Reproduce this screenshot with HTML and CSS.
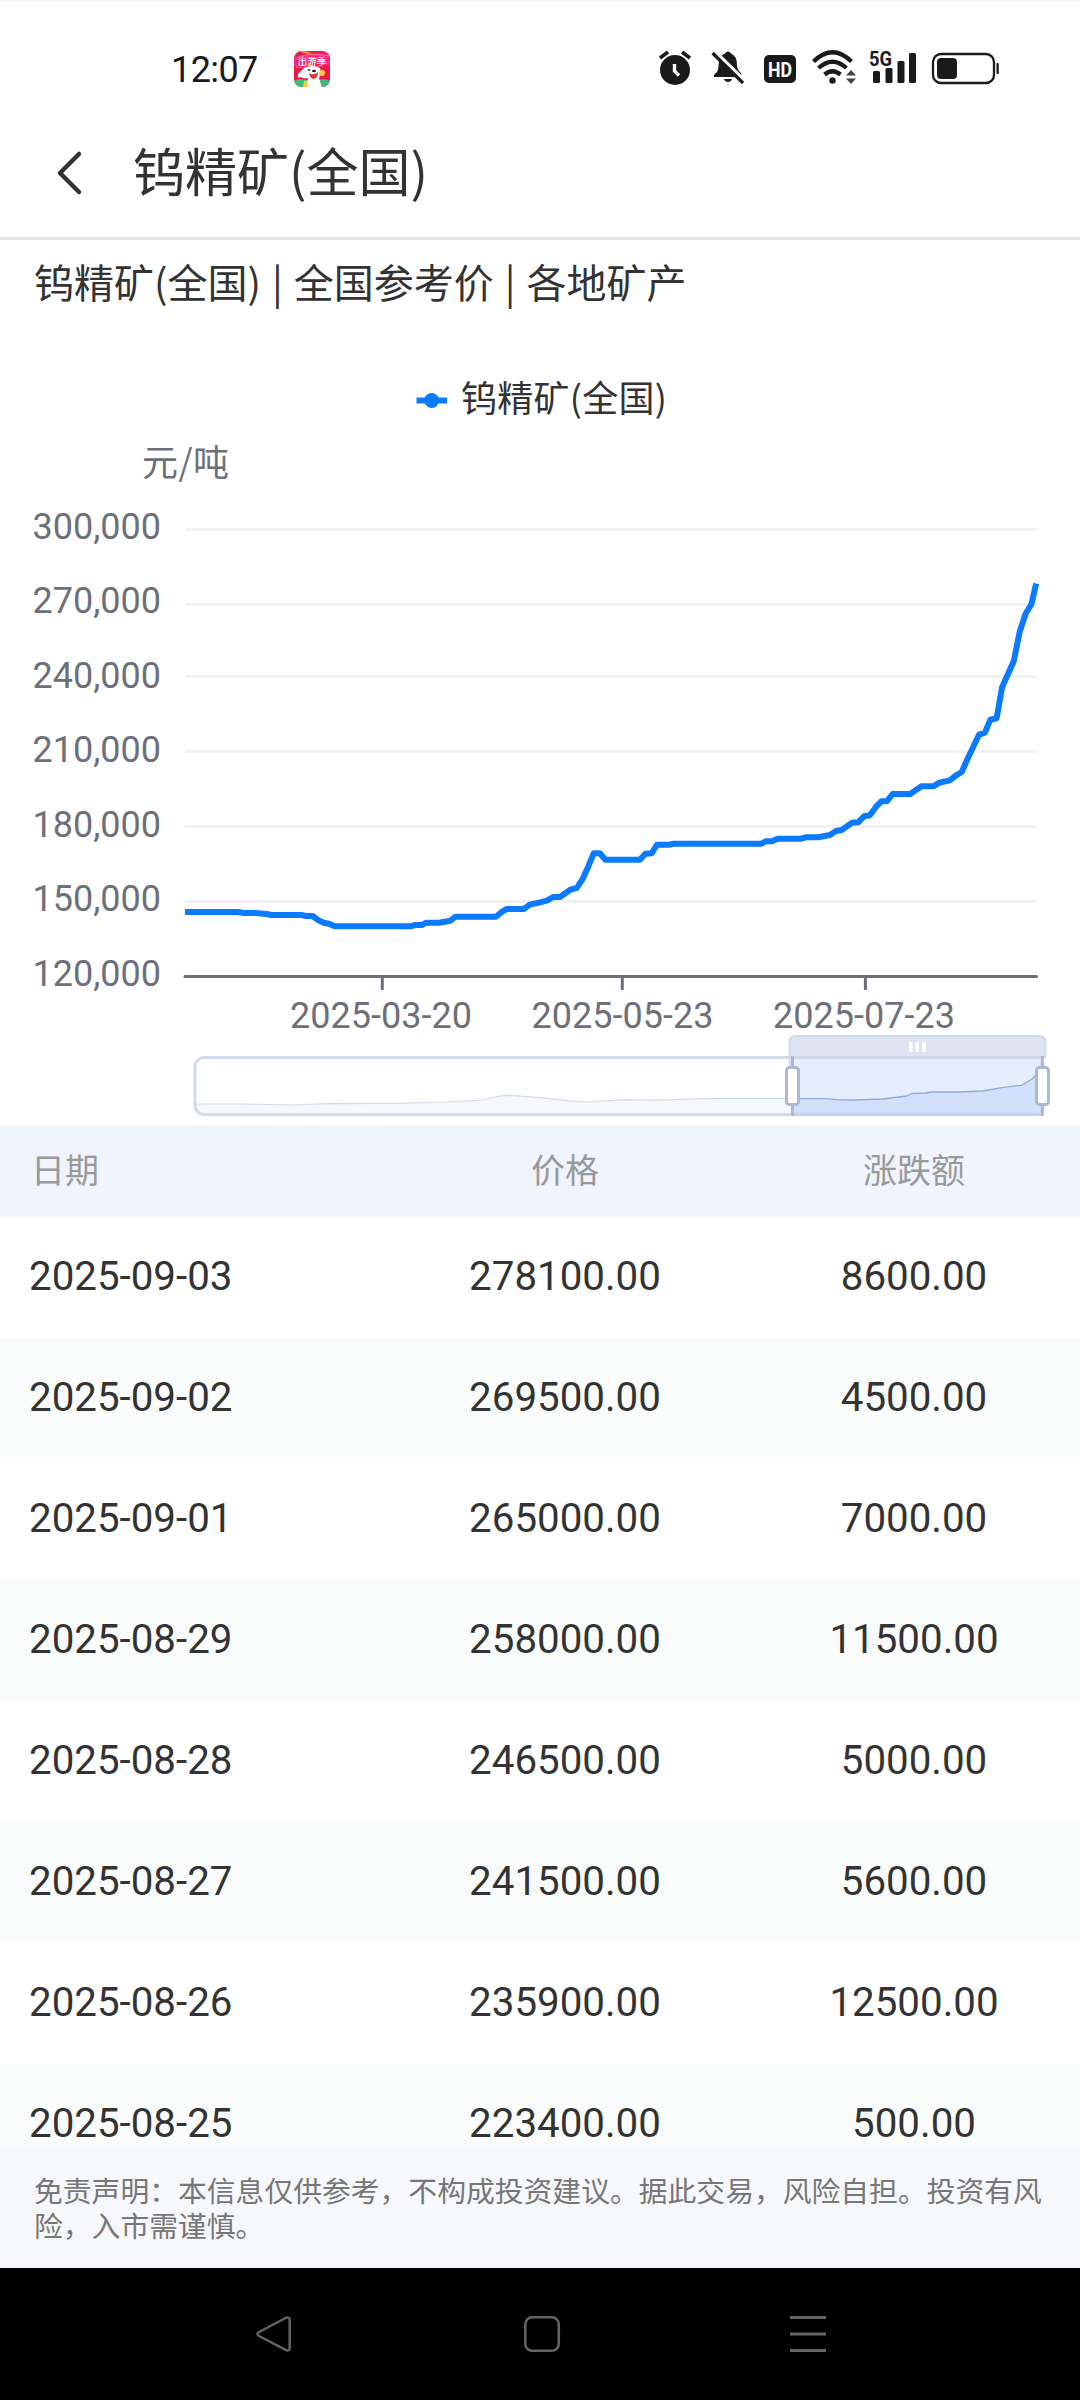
FILE: index.html
```html
<!DOCTYPE html>
<html lang="zh-CN">
<head>
<meta charset="utf-8">
<title>钨精矿(全国)</title>
<link rel="stylesheet" href="styles.css">
</head>
<body>
<div class="screen">
  <div class="statusbar">
    <span class="clock">12:07</span>
    <svg class="app-icon" width="38" height="38" viewBox="0 0 38 38">
      <defs><clipPath id="app"><rect x="1" y="1" width="36" height="36" rx="8"/></clipPath></defs>
      <g clip-path="url(#app)">
        <rect width="38" height="38" fill="#ee1747"/>
        <path d="M0 8Q14 0 38 4V16Q20 10 0 18Z" fill="#f6257d"/>
        <path d="M0 31Q10 27 19 32Q28 27 38 31V38H0Z" fill="#3fbd78"/>
        <path d="M2 9Q14 2 36 6M3 17Q22 20 36 12" stroke="#ff6fb0" stroke-width="1" fill="none"/>
        <path d="M8 1L18 4" stroke="#f99036" stroke-width="2"/>
        <path d="M11 18Q19 14 27 18Q29 23 26 28L29 38H13L15 28Q10 29 8 27Q4 29 5 24Z" fill="#fff"/>
        <circle cx="29" cy="23" r="3" fill="#ffc83d"/>
        <path d="M11 31Q15 29 15 37H10Z" fill="#ffc83d"/>
        <path d="M16 23Q20 26 25 22Q25 29 20 29Q17 28 16 23" fill="#e5383b"/>
        <circle cx="16" cy="20" r="1" fill="#222"/><ellipse cx="21" cy="21" rx="2" ry="1.3" fill="#222"/>
        <text x="19" y="15" text-anchor="middle" class="app-text">出游季</text>
      </g>
    </svg>
    <svg class="status-icons" width="350" height="44" viewBox="654 46 350 44">
      <g fill="#1a1a1a">
        <circle cx="675" cy="70" r="15"/>
        <path d="M660 58L668 52M690 58L682 52" stroke="#1a1a1a" stroke-width="3.6"/>
        <path d="M674.500 64V71L679 75.500" stroke="#fff" stroke-width="3.4" fill="none"/>
        <path d="M716 73Q718.500 71 718.500 66Q718.500 56 725 53.500Q728 49.500 731 53.500Q737 56 737 65Q737 70 740.500 72.500Q742 74 741 77H714Q713 75 716 73Z"/>
        <path d="M724 79H732Q731 82 728 82Q725 82 724 79Z"/>
        <path d="M713.500 51L745 82" stroke="#fff" stroke-width="5"/>
        <path d="M712.500 53L743 83" stroke="#1a1a1a" stroke-width="3.2"/>
        <rect x="764" y="55" width="32" height="28" rx="5"/>
        <text x="780" y="76.800" text-anchor="middle" textLength="24" lengthAdjust="spacingAndGlyphs" class="hd">HD</text>
        <g fill="none" stroke="#1a1a1a" stroke-width="4.200">
          <path d="M813.500 61.500Q832.500 43 851.500 61.500"/>
          <path d="M818.500 68Q832.500 55.500 846.500 68"/>
          <path d="M824.500 74.500Q832.500 68 840.500 74.500"/>
        </g>
        <circle cx="832.500" cy="80.500" r="3.200"/>
        <path d="M846 75.500L851 70L856 75.500ZM846 78.500L851 84L856 78.500Z" fill="#444"/>
        <text x="869" y="66" textLength="23" lengthAdjust="spacingAndGlyphs" class="fiveg">5G</text>
        <rect x="873" y="71" width="7" height="12" rx="1.500"/>
        <rect x="885.500" y="68" width="7" height="15" rx="1.500"/>
        <rect x="897.500" y="61" width="7" height="22" rx="1.500"/>
        <rect x="909" y="53" width="7" height="30" rx="1.500"/>
        <rect x="933" y="54" width="61" height="29" rx="8" fill="none" stroke="#1a1a1a" stroke-width="2.300"/>
        <rect x="937" y="58" width="20" height="21" rx="4"/>
        <rect x="996.500" y="63" width="2.300" height="11" rx="1"/>
      </g>
    </svg>
  </div>
  <header class="titlebar">
    <svg class="back" width="30" height="48" viewBox="0 0 30 48"><path d="M24 5L5 24L24 43" fill="none" stroke="#333" stroke-width="4.500" stroke-linecap="round" stroke-linejoin="round"/></svg>
    <h1 class="title">钨精矿(全国)</h1>
  </header>
  <div class="subtitle">钨精矿(全国) | 全国参考价 | 各地矿产</div>
  <svg class="chart" width="1080" height="785" viewBox="0 340 1080 785">
    <path d="M416.500 400.500H447" stroke="#0a7aff" stroke-width="6"/>
    <circle cx="431.700" cy="400.500" r="7.500" fill="#0a7aff"/>
    <text x="461" y="412" class="cjk legend" textLength="206">钨精矿(全国)</text>
    <text x="142" y="476" class="cjk axis" textLength="87">元/吨</text>
    <g stroke="#f2f2f2" stroke-width="3">
      <path d="M185 529.500H1037M185 604.500H1037M185 676.500H1037M185 751.500H1037M185 826.500H1037M185 901.500H1037"/>
    </g>
    <g class="axis" text-anchor="end">
      <text x="161" y="539">300,000</text>
      <text x="161" y="613">270,000</text>
      <text x="161" y="688">240,000</text>
      <text x="161" y="762">210,000</text>
      <text x="161" y="837">180,000</text>
      <text x="161" y="911">150,000</text>
      <text x="161" y="986">120,000</text>
    </g>
    <path d="M185 976.500H1036.500" stroke="#6e7079" stroke-width="3" stroke-linecap="round"/>
    <path d="M382.300 976V990M622.300 976V990M865.400 976V990" stroke="#6e7079" stroke-width="3"/>
    <g class="axis" text-anchor="middle">
      <text x="381" y="1028">2025-03-20</text>
      <text x="622.500" y="1028">2025-05-23</text>
      <text x="864" y="1028">2025-07-23</text>
    </g>
    <polyline fill="none" stroke="#0a7aff" stroke-width="6" stroke-linejoin="round" points="185,912 237.600,912 243.800,913 254.800,913 266.900,914 271.300,915 301.300,915 305.800,916 312.700,916 317.500,919.700 323.700,922.700 328.900,923.700 334.700,926.300 410.500,926.300 415,925 421.800,925 426.300,922.700 439,922.700 450.400,920.700 455.200,916.700 495.900,916.700 502,911.700 506.900,909 524.100,909 529.600,904.700 540,902.300 546.900,900.700 553.100,897 560,897 570.300,889.700 576.800,888 583,878.300 588.200,866.700 593.700,853.300 599.900,853.300 605.400,859.700 639.900,859.700 645.400,853.700 651.600,853.300 657.100,844.700 669.100,844.700 673.600,843.700 761.100,843.700 765.900,841.300 772.100,841.300 777.600,838.700 801,838.700 805.800,837.300 818.200,837.300 829.900,835 836.100,831 841.700,830 852,822.700 858.200,822.300 864,816.300 869.900,815.300 876.100,806.700 881.300,801.300 886.800,801.300 892.600,794 910.200,794 921.500,786.300 933.300,786.300 939.400,782.700 949.800,780.300 956,775.300 961.800,772 967,760 979,734.700 984.900,732.700 990.400,719.700 996.600,718.300 1002.100,687.300 1013.800,661 1019.700,631.700 1025.500,614 1031.400,604.300 1036.200,583.500"/>

    <!-- range slider under the plot -->
    <path fill="#f6f8fd" d="M195 1104H241L293 1105L327 1103.700L396 1103.300L447.700 1102L478.700 1100.300L487 1099L494 1097L506 1095.300L523.400 1096.300L540 1097.700L557 1099.300L572.700 1101.300L584.800 1102L626 1099.700L655.400 1100.300L677.700 1099.300L708.700 1098.700H792V1115H195Z"/>
    <path fill="none" stroke="#d2dbe8" stroke-width="1.200" d="M195 1104H241L293 1105L327 1103.700L396 1103.300L447.700 1102L478.700 1100.300L487 1099L494 1097L506 1095.300L523.400 1096.300L540 1097.700L557 1099.300L572.700 1101.300L584.800 1102L626 1099.700L655.400 1100.300L677.700 1099.300L708.700 1098.700H792"/>
    <path fill="#dee3f2" stroke="#d2daea" stroke-width="2" d="M789.500 1068V1042Q789.500 1036 796 1036H1039Q1045.500 1036 1045.500 1042V1057H792V1068Z"/>
    <rect x="195" y="1057.500" width="848.500" height="57" rx="9" fill="none" stroke="#d2dbec" stroke-width="3"/>
    <rect x="792" y="1059" width="250" height="56" fill="#e6edfd"/>
    <path fill="#d3e0fc" d="M792 1098.700H825.800L836 1099.700L855 1100L882.600 1099L906.700 1096L911.900 1093.300L925.700 1093L930.800 1092H960L982.500 1091L1001.400 1087.700L1021.400 1085.300L1027 1082L1032 1079L1036 1075L1041 1072.700V1113H792Z"/>
    <path fill="none" stroke="#8faadc" stroke-width="1.300" d="M792 1098.700H825.800L836 1099.700L855 1100L882.600 1099L906.700 1096L911.900 1093.300L925.700 1093L930.800 1092H960L982.500 1091L1001.400 1087.700L1021.400 1085.300L1027 1082L1032 1079L1036 1075L1041 1072.700"/>
    <path d="M792 1114.300H1042" stroke="#c6d2ea" stroke-width="3"/>
    <path d="M792 1057.500H1042" stroke="#ced8ec" stroke-width="2.500"/>
    <path d="M792.500 1056V1116M1042.300 1056V1116" stroke="#acb8d1" stroke-width="3"/>
    <g fill="#fff" stroke="#acb8d1" stroke-width="3">
      <rect x="786.500" y="1067.500" width="12" height="37" rx="3"/>
      <rect x="1036.500" y="1067.500" width="12" height="37" rx="3"/>
    </g>
    <g fill="#fff">
      <rect x="909" y="1042" width="3.500" height="10" rx="1"/>
      <rect x="915.500" y="1042" width="3.500" height="10" rx="1"/>
      <rect x="922" y="1042" width="4" height="10" rx="1"/>
    </g>
  </svg>
  <div class="table">
    <div class="row head"><span>日期</span><span>价格</span><span>涨跌额</span></div>
    <div class="row"><span>2025-09-03</span><span>278100.00</span><span>8600.00</span></div>
    <div class="row"><span>2025-09-02</span><span>269500.00</span><span>4500.00</span></div>
    <div class="row"><span>2025-09-01</span><span>265000.00</span><span>7000.00</span></div>
    <div class="row"><span>2025-08-29</span><span>258000.00</span><span>11500.00</span></div>
    <div class="row"><span>2025-08-28</span><span>246500.00</span><span>5000.00</span></div>
    <div class="row"><span>2025-08-27</span><span>241500.00</span><span>5600.00</span></div>
    <div class="row"><span>2025-08-26</span><span>235900.00</span><span>12500.00</span></div>
    <div class="row"><span>2025-08-25</span><span>223400.00</span><span>500.00</span></div>
  </div>
  <div class="disclaimer">免责声明：本信息仅供参考，不构成投资建议。据此交易，风险自担。投资有风险，入市需谨慎。</div>
  <nav class="navbar">
    <svg width="1080" height="132" viewBox="0 0 1080 132" fill="none" stroke="#636363" stroke-width="2.500" stroke-linejoin="round">
      <path d="M286.500 49.500L259 64Q256 66 259 68L286.500 82.300Q289.700 83 289.700 80V52Q289.700 49 286.500 49.500Z"/>
      <rect x="525.300" y="49.300" width="33.500" height="33.500" rx="7"/>
      <path d="M790 49.500H826M790 66H826M790 82.500H826" stroke-width="3"/>
    </svg>
  </nav>
</div>
</body>
</html>
```
FILE: styles.css
```css
body {
  margin: 0;
  background: #fff;
}

.screen {
  display: flex;
  flex-direction: column;
  width: 1080px;
  height: 2400px;
  overflow: hidden;
  box-sizing: border-box;
  border-top: 2px solid #f6f6fc;
  font-family: Roboto, "Noto Sans CJK SC", sans-serif;
  color: #333;
}

.statusbar {
  display: flex;
  align-items: flex-start;
  height: 104px;
  padding: 44px 76px 0 171px;
  box-sizing: border-box;
}

.clock {
  width: 122px;
  margin-top: 2px;
  font-size: 36px;
  line-height: 44px;
  letter-spacing: -0.6px;
  color: #1a1a1a;
}

.app-icon {
  margin-top: 4px;
}

.app-text {
  font: 500 9.5px "Noto Sans CJK SC", sans-serif;
  fill: #fff;
}

.status-icons {
  margin-left: auto;
}

.hd {
  font: bold 21px Roboto, sans-serif;
  fill: #fff;
}

.fiveg {
  font: bold 20px Roboto, sans-serif;
}

.titlebar {
  display: flex;
  align-items: center;
  height: 134px;
  padding: 0 0 3px 55px;
  box-sizing: border-box;
  border-bottom: 3px solid #e6e6e6;
}

.back {
  margin-top: 6px;
}

.title {
  margin: 0 0 0 48px;
  font: 400 52px/72px "Noto Sans CJK SC", sans-serif;
}

.subtitle {
  height: 100px;
  padding: 12px 0 0 34px;
  box-sizing: border-box;
  font: 400 40px/58px "Noto Sans CJK SC", sans-serif;
  word-spacing: 2px;
}

.chart {
  display: block;
  flex: none;
}

.cjk {
  font-family: "Noto Sans CJK SC", sans-serif;
}

.legend {
  font-size: 36px;
  fill: #333;
}

.axis {
  font-size: 36px;
  fill: #6e7079;
}

.table {
  height: 1024px;
  overflow: hidden;
}

.row {
  display: grid;
  grid-template-columns: 321px 430px 268px;
  align-items: center;
  height: 121px;
  padding: 0 0 2px 29px;
  box-sizing: border-box;
  font-size: 40.3px;
  text-align: center;
}

.row span:first-child {
  text-align: left;
}

.row:nth-child(odd) {
  background: #fafcfb;
}

.row.head {
  height: 92px;
  padding: 0 0 5px 31px;
  grid-template-columns: 319px 430px 268px;
  background: #f0f4fe;
  font-size: 34px;
  color: #999;
}

.disclaimer {
  height: 119px;
  padding: 23px 34px 0 34px;
  box-sizing: border-box;
  background: #f7f8fb;
  font: 400 28.8px/35px "Noto Sans CJK SC", sans-serif;
  color: #777;
}

.navbar {
  height: 132px;
  background: #000;
}
```
